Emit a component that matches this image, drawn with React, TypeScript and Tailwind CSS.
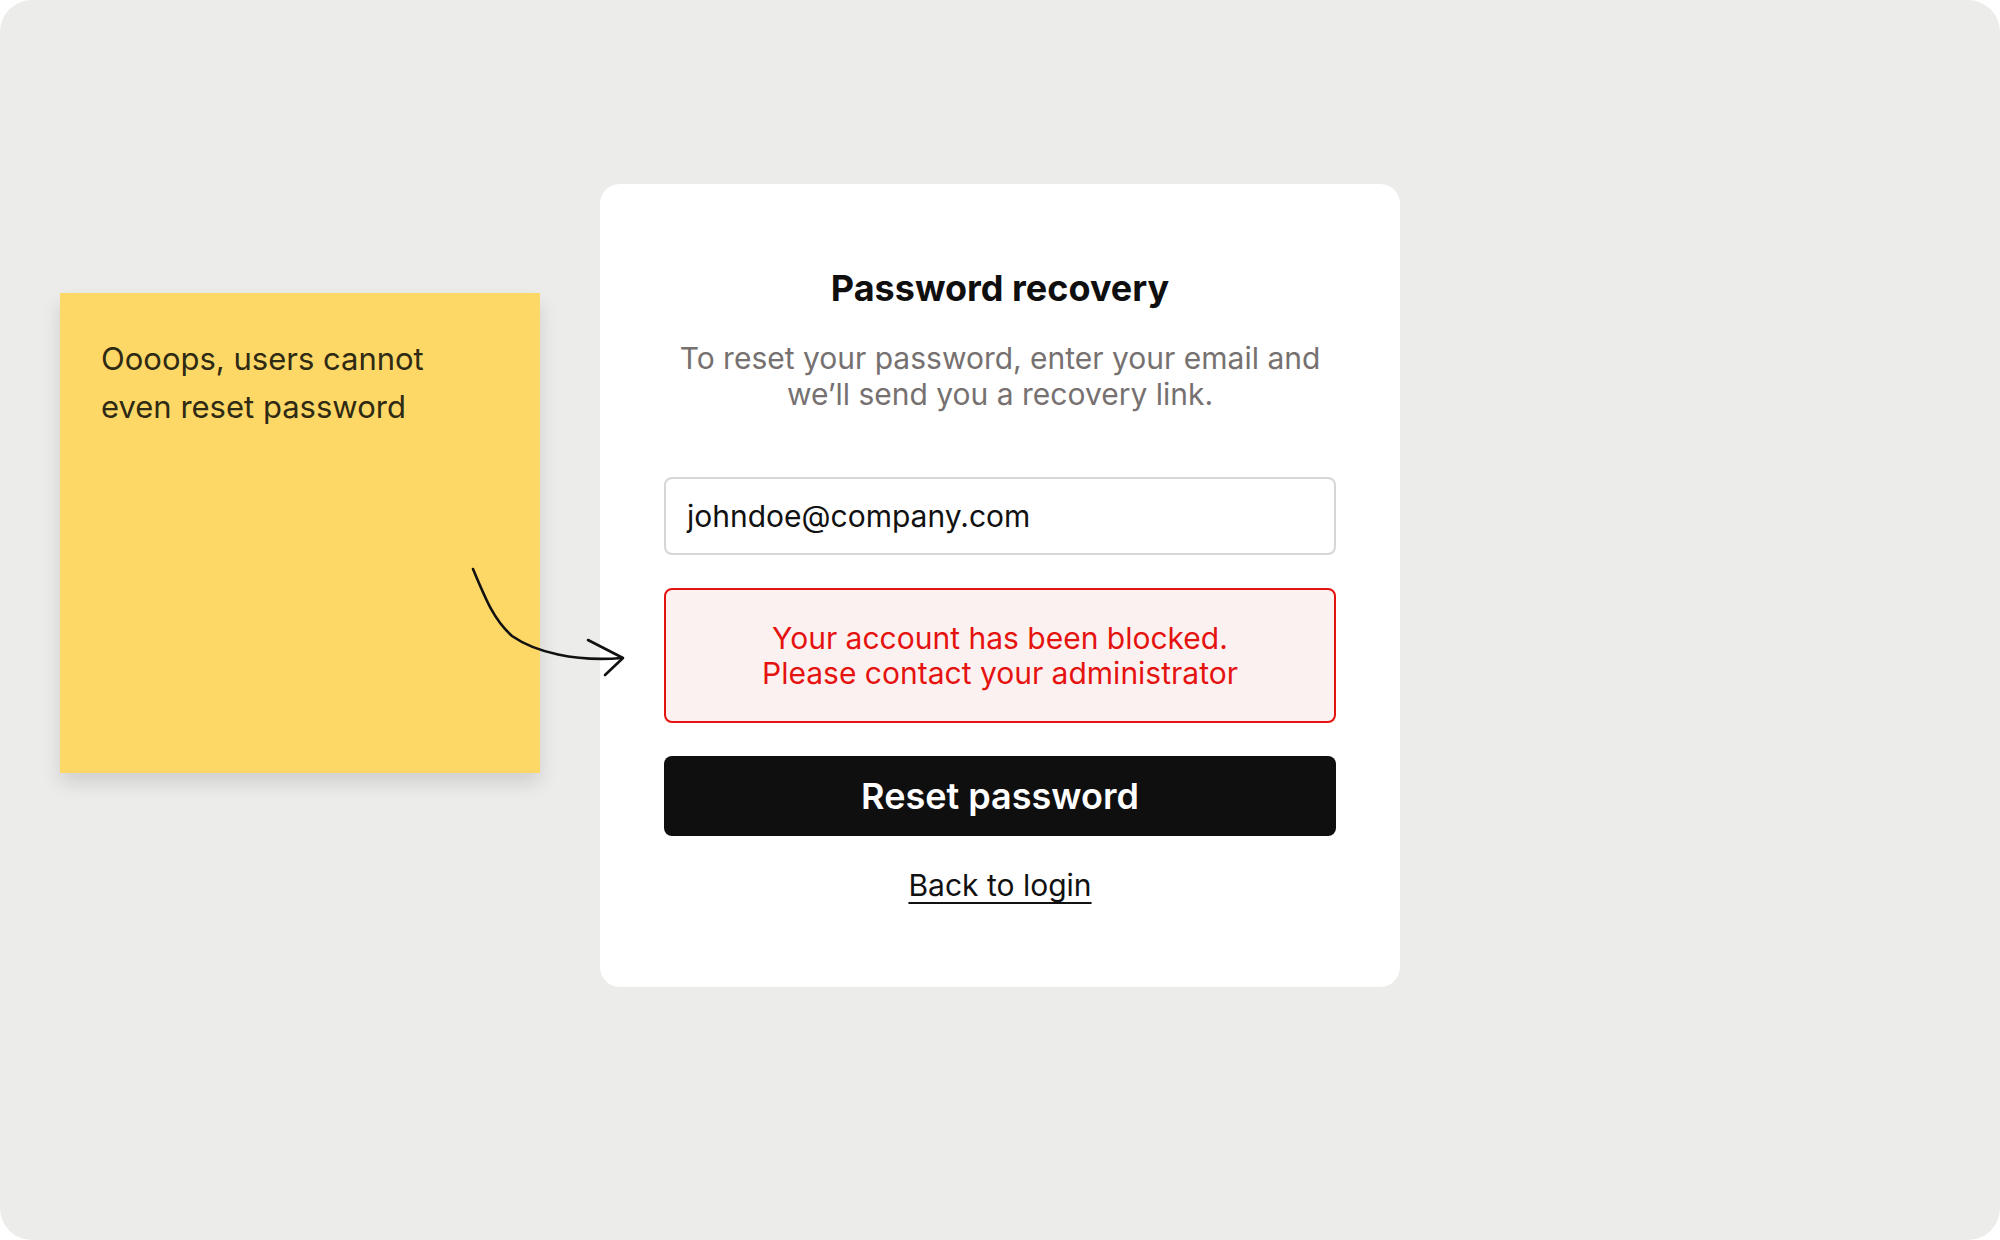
import React from 'react';

function Arrow() {
  return (
    <svg
      className="absolute left-0 top-0 pointer-events-none"
      width={2000}
      height={1240}
      viewBox="0 0 2000 1240"
      fill="none"
    >
      <path
        d="M473 569 C 486 600, 494 620, 512 636 C 535 652, 575 662, 622 658"
        stroke="#111"
        strokeWidth={2.6}
        strokeLinecap="round"
      />
      <path
        d="M588 640 L 623 658 L 605 675"
        stroke="#111"
        strokeWidth={2.6}
        strokeLinecap="round"
        strokeLinejoin="round"
      />
    </svg>
  );
}

function StickyNote() {
  return (
    <div className="mt-[109px] w-[480px] h-[480px] shrink-0 bg-[#FED866] pl-[41px] pt-[42px] shadow-[0_10px_18px_rgba(0,0,0,0.12)]">
      <p className="text-[31px] leading-[48px] text-[#2E2A13]">
        Oooops, users cannot
        <br />
        even reset password
      </p>
    </div>
  );
}

function RecoveryCard() {
  return (
    <div className="w-[800px] shrink-0 bg-white rounded-[20px] px-16 pt-[83px] pb-[84px] flex flex-col items-center">
      <h1 className="text-[36px] leading-[42px] font-bold text-[#0F0F0F]">Password recovery</h1>
      <p className="mt-[31px] text-[30px] leading-[36px] text-[#767170] text-center">
        To reset your password, enter your email and
        <br />
        we’ll send you a recovery link.
      </p>

      <div className="mt-[65px] w-full h-[78px] border-2 border-[#D6D6D6] rounded-lg flex items-center px-[21px]">
        <span className="text-[30px] text-[#111]">johndoe@company.com</span>
      </div>

      <div className="mt-[33px] w-full h-[135px] border-2 border-[#E5130F] bg-[#FCF1F1] rounded-lg flex items-center justify-center">
        <p className="text-[30px] leading-[35px] text-[#E5130F] text-center">
          Your account has been blocked.
          <br />
          Please contact your administrator
        </p>
      </div>

      <button className="mt-[33px] w-full h-[80px] bg-[#0F0F0F] text-white rounded-lg text-[36px] font-semibold">
        Reset password
      </button>

      <a className="mt-[31px] text-[30px] leading-[36px] text-[#111] underline decoration-2 underline-offset-[6px]">
        Back to login
      </a>
    </div>
  );
}

export default function App() {
  return (
    <div className="w-[2000px] h-[1240px] bg-white" style={{ fontFamily: 'Inter, "Noto Sans", sans-serif' }}>
      <div className="relative w-full h-full bg-[#ECECEA] rounded-[32px] flex items-start gap-[60px] pl-[60px] pt-[184px]">
        <StickyNote />
        <RecoveryCard />
        <Arrow />
      </div>
    </div>
  );
}
